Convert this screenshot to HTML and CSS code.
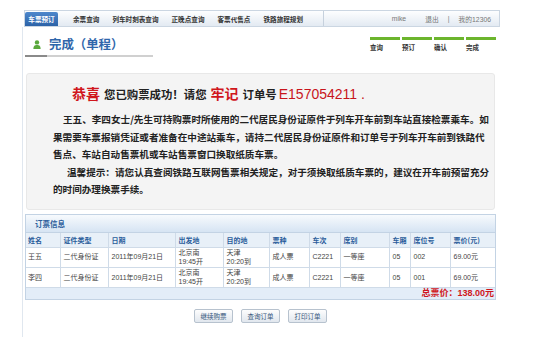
FILE: index.html
```html
<!DOCTYPE html>
<html lang="zh-CN">
<head>
<meta charset="utf-8">
<title>完成（单程）</title>
<link rel="stylesheet" href="styles.css">
</head>
<body>
<div class="page">
  <div class="nav">
    <div class="tabs">
      <span class="tab active">车票预订</span>
      <span class="tab">余票查询</span>
      <span class="tab">列车时刻表查询</span>
      <span class="tab">正晚点查询</span>
      <span class="tab">客票代售点</span>
      <span class="tab">铁路旅程规划</span>
    </div>
    <div class="user">
      <span class="uname">mike</span>
      <span class="logout">退出</span>
      <span class="sep">|</span>
      <span class="mine">我的12306</span>
    </div>
  </div>
  <div class="content">
    <div class="titlebar">
      <div class="title">
        <svg class="uicon" width="8" height="9" viewBox="0 0 8 9"><circle cx="4" cy="2.4" r="2.2" fill="#5aa83c"/><path d="M0.4 9 C0.4 5.6 2 5 4 5 S7.6 5.6 7.6 9 Z" fill="#5aa83c"/></svg>
        <h1>完成（单程）</h1>
      </div>
      <ol class="steps">
        <li>查询</li>
        <li>预订</li>
        <li>确认</li>
        <li>完成</li>
      </ol>
    </div>

    <div class="msg">
      <p class="headline"><span class="big">恭喜</span>您已购票成功！请您<span class="big">牢记</span>订单号<span class="orderno">E157054211 .</span></p>
      <p class="info first">王五、李四女士/先生可持购票时所使用的二代居民身份证原件于列车开车前到车站直接检票乘车。如<br>果需要车票报销凭证或者准备在中途站乘车，请持二代居民身份证原件和订单号于列车开车前到铁路代<br>售点、车站自动售票机或车站售票窗口换取纸质车票。</p>
      <p class="info tip">温馨提示：请您认真查阅铁路互联网售票相关规定，对于须换取纸质车票的，建议在开车前预留充分<br>的时间办理换票手续。</p>
    </div>

    <div class="order">
      <div class="order-title">订票信息</div>
      <table>
        <colgroup>
          <col class="c1"><col class="c2"><col class="c3"><col class="c4"><col class="c5"><col class="c6"><col class="c7"><col class="c8"><col class="c9"><col class="c10"><col class="c11">
        </colgroup>
        <thead>
          <tr><th>姓名</th><th>证件类型</th><th>日期</th><th>出发地</th><th>目的地</th><th>票种</th><th>车次</th><th>席别</th><th>车厢</th><th>席位号</th><th>票价(元)</th></tr>
        </thead>
        <tbody>
          <tr><td>王五</td><td>二代身份证</td><td>2011年09月21日</td><td>北京南<br>19:45开</td><td>天津<br>20:20到</td><td>成人票</td><td>C2221</td><td>一等座</td><td>05</td><td>002</td><td>69.00元</td></tr>
          <tr><td>李四</td><td>二代身份证</td><td>2011年09月21日</td><td>北京南<br>19:45开</td><td>天津<br>20:20到</td><td>成人票</td><td>C2221</td><td>一等座</td><td>05</td><td>001</td><td>69.00元</td></tr>
        </tbody>
      </table>
      <div class="total">总票价：138.00元</div>
    </div>

    <div class="actions">
      <button type="button">继续购票</button>
      <button type="button">查询订单</button>
      <button type="button">打印订单</button>
    </div>
  </div>
</div>
</body>
</html>
```

FILE: styles.css
```css
html, body {
  margin: 0;
  padding: 0;
  background: #fff;
}
body {
  font-family: "Noto Sans CJK SC", "Liberation Sans", sans-serif;
  color: #333;
}
.page {
  margin-left: 22px;
  width: 478px;
  padding-top: 10px;
}

/* nav */
.nav {
  margin-left: 2px;
  width: 476px;
  height: 17px;
  box-sizing: border-box;
  border: 1px solid #cbd6e2;
  background: linear-gradient(#fdfeff, #e3eaf2);
  display: flex;
  justify-content: space-between;
}
.tabs {
  display: flex;
  align-items: flex-end;
  width: 299px;
  box-sizing: border-box;
  border-right: 1px solid #c6d1dd;
}
.tab {
  height: 14px;
  padding: 0 6.5px;
  font: bold 6.6px/14px "Noto Sans CJK SC", sans-serif;
  color: #333;
  white-space: nowrap;
}
.tab.active {
  width: 33px;
  padding: 0;
  margin-right: 8.5px;
  text-align: center;
  color: #fff;
  background: linear-gradient(#4d87cc, #2c62a7);
  border-radius: 2px 2px 0 0;
}
.user {
  display: flex;
  align-items: center;
  padding-right: 8px;
  font: 6.8px "Liberation Sans", "Noto Sans CJK SC", sans-serif;
  color: #777;
}
.logout { margin-left: 19px; }
.sep { margin: 0 9px; }

/* content */
.content {
  border-left: 1px solid #e0e7ef;
  min-height: 310px;
}
.titlebar {
  display: flex;
  justify-content: space-between;
}
.title {
  margin-left: 2px;
  width: 128px;
  height: 22px;
  padding-top: 6px;
  display: flex;
  align-items: center;
  border-bottom: 2px solid #cfcfcf;
  border-image: linear-gradient(to right, #8a8a8a 23px, #d0d0d0 23px) 1;
}
.uicon {
  margin-left: 8px;
}
.title h1 {
  margin: 0 0 0 8px;
  font: bold 12.4px/22px "Noto Sans CJK SC", sans-serif;
  color: #2f66ab;
  white-space: nowrap;
}
.steps {
  list-style: none;
  margin: 0 4px 0 0;
  padding: 10px 0 0;
  display: flex;
  gap: 2px;
}
.steps li {
  width: 30px;
  border-top: 3px solid #6cb52d;
  padding-top: 3px;
  font: bold 6.5px/8px "Noto Sans CJK SC", sans-serif;
  color: #333;
}

/* message */
.msg {
  margin: 16px 0 0 3px;
  width: 469px;
  box-sizing: border-box;
  background: #f4f4f4;
  border: 1px solid #e8e8e8;
  border-radius: 3px;
  padding: 10px 0 10.5px 26px;
}
.headline {
  margin: 0 0 9px 19px;
  height: 18px;
  font: bold 11.4px/18px "Noto Sans CJK SC", sans-serif;
  color: #222;
  white-space: nowrap;
}
.big {
  font-size: 14px;
  color: #d0161c;
  margin: 0 4px 0 0;
}
.big + .big, .headline .big:nth-child(2) {
  margin-left: 4px;
}
.orderno {
  margin-left: 2px;
  font: 14px "Liberation Sans", sans-serif;
  color: #c8141c;
}
.info {
  margin: 0;
  font: bold 9.6px/17.5px "Noto Sans CJK SC", sans-serif;
  color: #222;
  white-space: nowrap;
}
.info.first { text-indent: 10px; }
.info.tip { text-indent: 14px; }

/* order table */
.order {
  margin: 4px 0 0 2px;
  width: 471px;
  box-sizing: border-box;
  border: 1px solid #c3d3e4;
}
.order-title {
  height: 17px;
  line-height: 17px;
  padding-left: 9px;
  background: linear-gradient(#f7fafd, #d6e4f3);
  border-bottom: 1px solid #c3d3e4;
  font: bold 7.5px/17px "Noto Sans CJK SC", sans-serif;
  color: #2b5d9b;
}
table {
  width: 100%;
  border-collapse: collapse;
  border-style: hidden;
  table-layout: fixed;
  font: 7px "Liberation Sans", "Noto Sans CJK SC", sans-serif;
  color: #444;
}
.c1 { width: 34px; }
.c2 { width: 48px; }
.c3 { width: 67px; }
.c4 { width: 48px; }
.c5 { width: 46px; }
.c6 { width: 40px; }
.c7 { width: 31px; }
.c8 { width: 49px; }
.c9 { width: 21px; }
.c10 { width: 40px; }
.c11 { width: 45px; }
th, td {
  border: 1px solid #cfdbe8;
  padding: 0 3px;
  text-align: left;
  white-space: nowrap;
  overflow: hidden;
}
th:first-child, td:first-child { padding-left: 2px; }
thead tr { height: 14px; }
th {
  background: #e8f0f8;
  font: bold 7px/12px "Noto Sans CJK SC", sans-serif;
  color: #2b5d9b;
}
tbody tr { height: 20px; }
td {
  line-height: 9.5px;
  background: #fff;
}
.total {
  height: 11px;
  line-height: 11px;
  background: #e3edf8;
  border-top: 1px solid #cfdbe8;
  text-align: right;
  padding-right: 1px;
  font: bold 9px/11px "Liberation Sans", "Noto Sans CJK SC", sans-serif;
  color: #d0161c;
}

/* buttons */
.actions {
  margin: 9px 0 0 2px;
  width: 471px;
  display: flex;
  justify-content: center;
  gap: 8px;
}
.actions button {
  width: 39px;
  height: 14px;
  padding: 0;
  border: 1px solid #b7c2ce;
  border-radius: 2px;
  background: linear-gradient(#fdfdfd, #e1e7ee);
  font: 6.5px/12px "Noto Sans CJK SC", sans-serif;
  color: #35557a;
}
```
